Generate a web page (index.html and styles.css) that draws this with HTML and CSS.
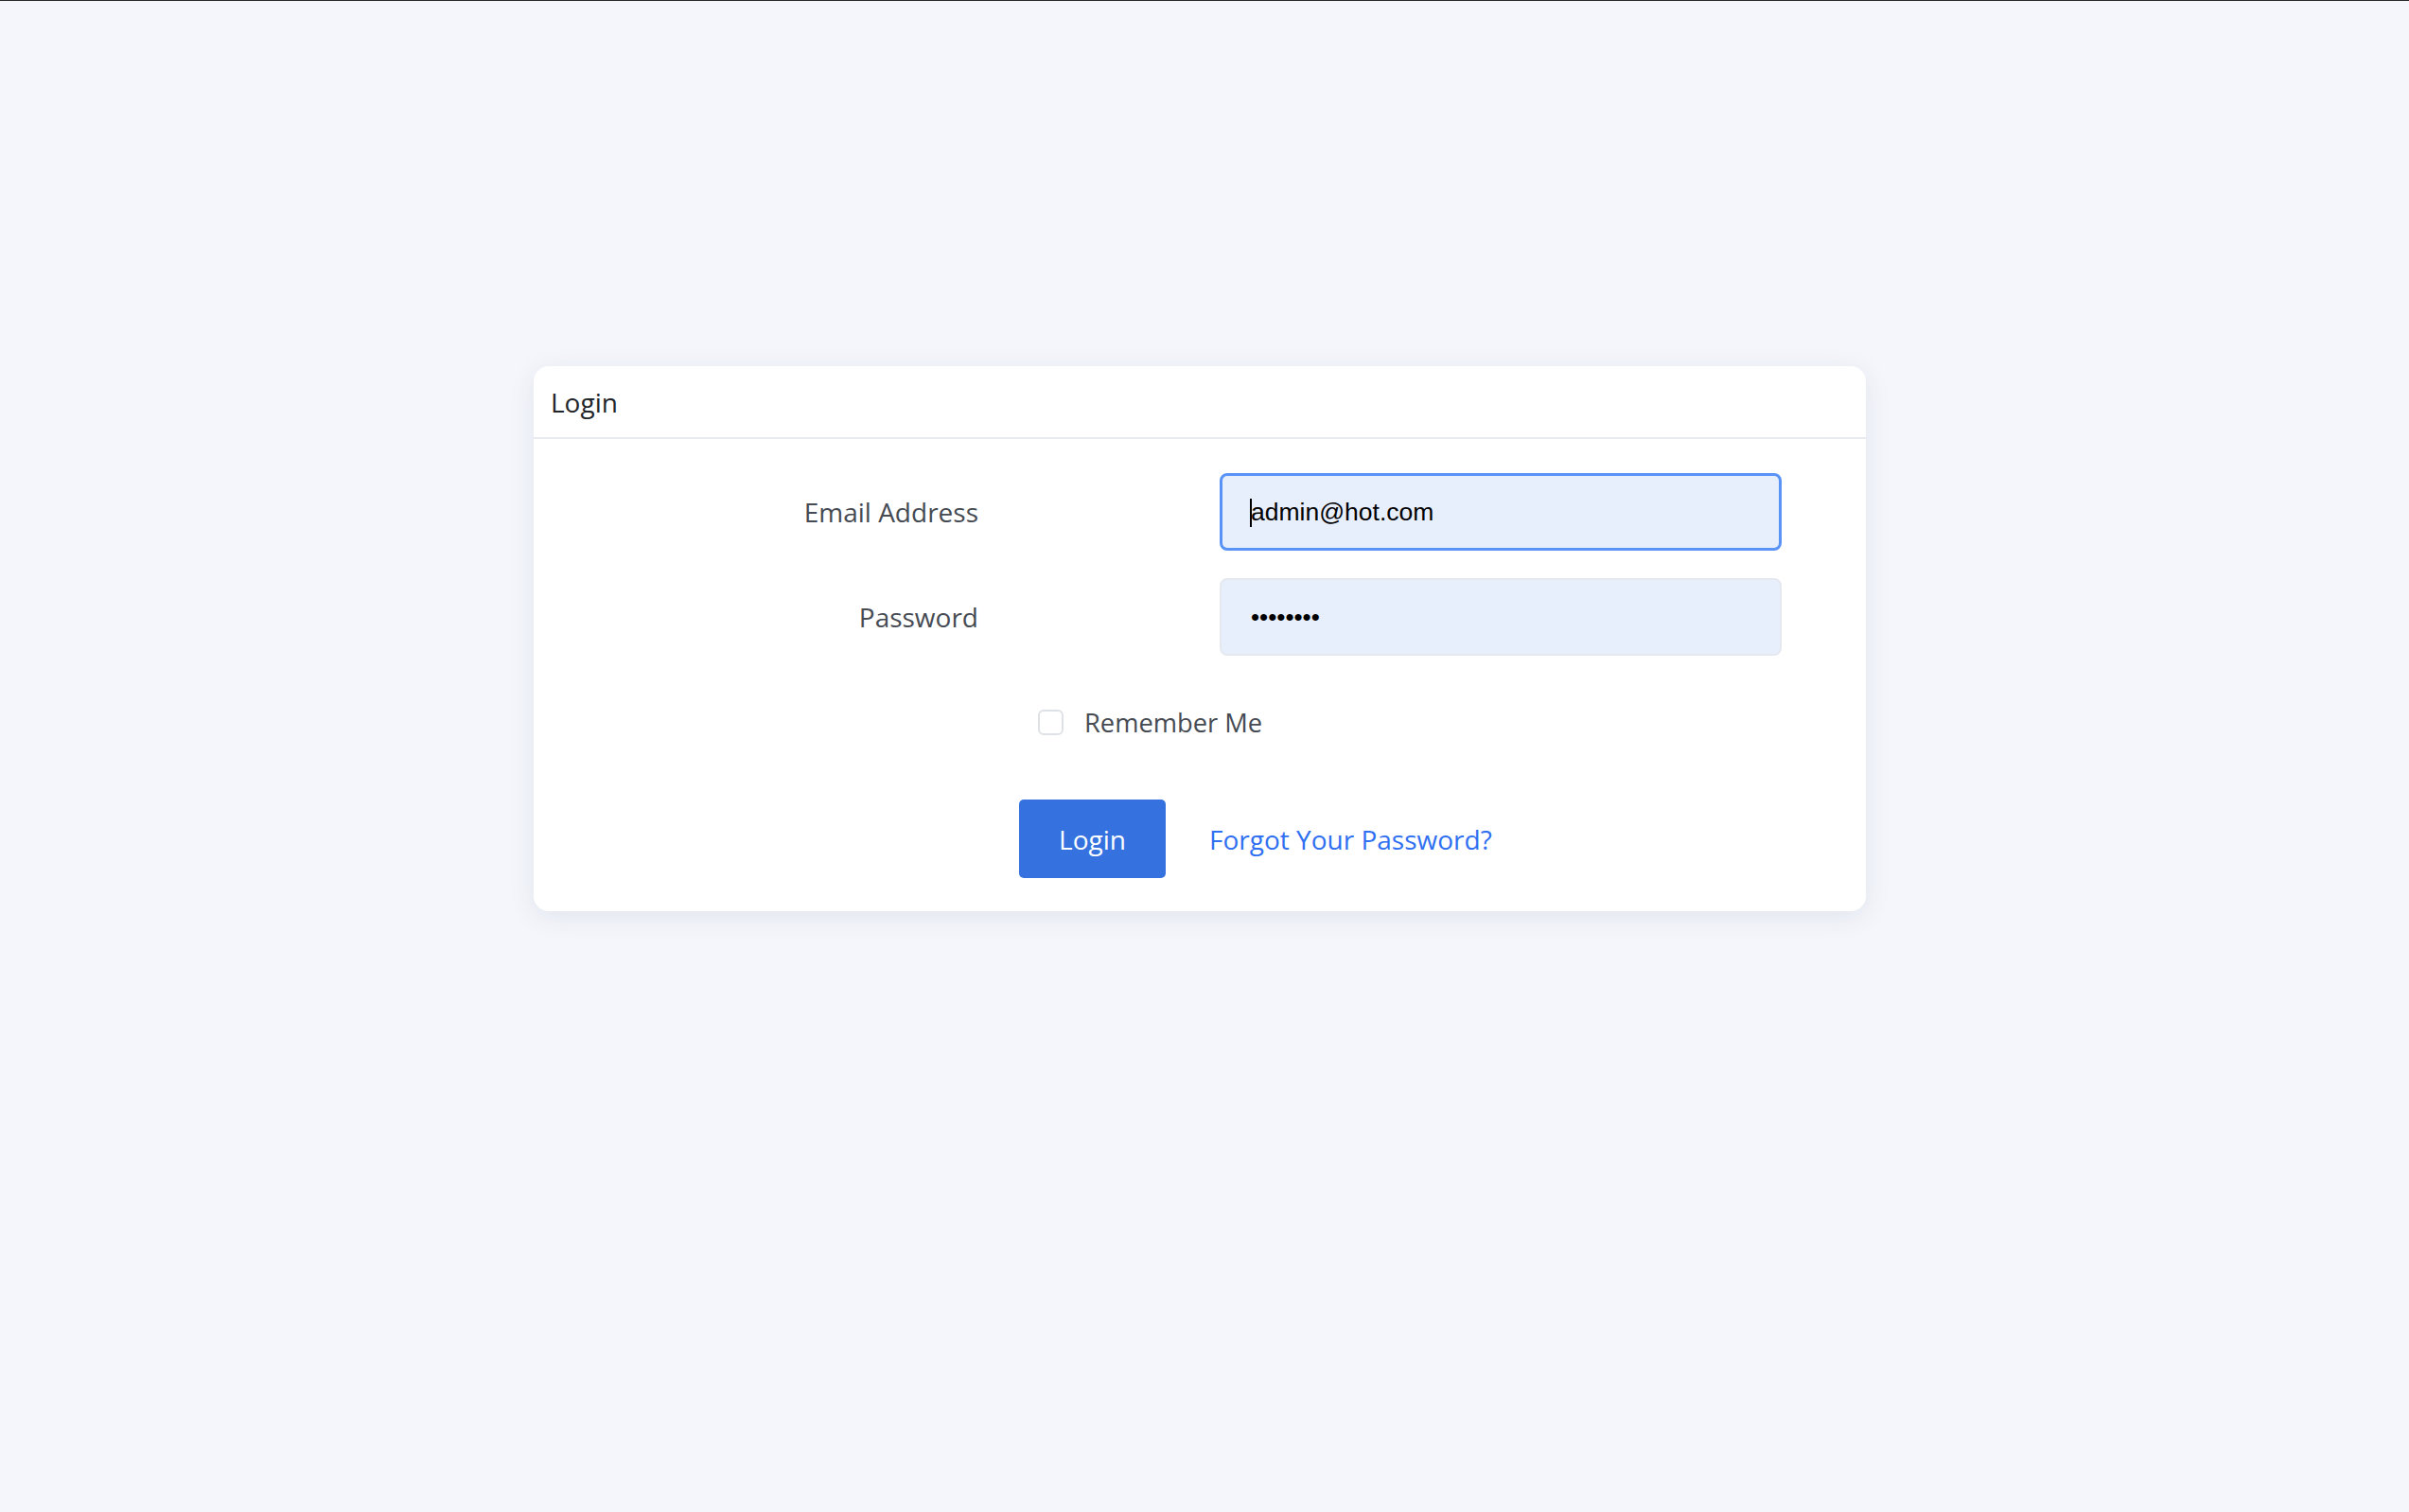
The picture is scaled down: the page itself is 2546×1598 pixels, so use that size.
FILE: index.html
```html
<!DOCTYPE html>
<html lang="en">
<head>
<meta charset="utf-8">
<title>Login</title>
<link rel="stylesheet" href="styles.css">
</head>
<body>
<div class="page">
  <div class="card">
    <div class="card-header">Login</div>
    <div class="card-body">
      <div class="form-row">
        <label class="label" for="email">Email Address</label>
        <div class="input input-focus"><span class="caret"></span><span class="value">admin@hot.com</span></div>
      </div>
      <div class="form-row">
        <label class="label" for="password">Password</label>
        <div class="input"><span class="value dots">••••••••</span></div>
      </div>
      <div class="remember-row">
        <span class="checkbox"></span>
        <span class="remember-text">Remember Me</span>
      </div>
      <div class="actions-row">
        <button class="btn">Login</button>
        <a class="link" href="#">Forgot Your Password?</a>
      </div>
    </div>
  </div>
</div>
</body>
</html>
```
FILE: styles.css
```css
* { box-sizing: border-box; }
html, body { margin: 0; padding: 0; }
body {
  background: #f4f6fb;
  border-top: 1px solid #2a2a2a;
  min-height: 1598px;
  font-family: "Open Sans", "Noto Sans", sans-serif;
}
.page {
  padding: 386px 0 0 564px;
}
.card {
  width: 1408px;
  height: 576px;
  background: #ffffff;
  border-radius: 16px;
  box-shadow: 0 6px 28px rgba(40, 50, 100, 0.09);
  display: flex;
  flex-direction: column;
}
.card-header {
  height: 77px;
  border-bottom: 2px solid #e9eaee;
  padding: 0 18px;
  display: flex;
  align-items: center;
  font-size: 28px;
  color: #212529;
}
.card-body {
  padding-top: 36px;
  display: flex;
  flex-direction: column;
}
.form-row {
  display: grid;
  grid-template-columns: 470px 594px;
  column-gap: 255px;
  align-items: center;
  margin-bottom: 29px;
}
.label {
  text-align: right;
  font-size: 28px;
  color: #464b53;
}
.input {
  height: 82px;
  border-radius: 8px;
  background: #e8effc;
  border: 2px solid #e5e8ee;
  display: flex;
  align-items: center;
  padding-left: 31px;
  position: relative;
}
.input-focus {
  border: 3px solid #5a93f6;
  padding-left: 30px;
}
.value {
  font-family: "Liberation Sans", Arial, sans-serif;
  font-size: 26.5px;
  color: #000;
}
.dots {
  font-size: 26px;
}
.caret {
  position: absolute;
  left: 29px;
  top: 24px;
  width: 2px;
  height: 30px;
  background: #000;
}
.remember-row {
  display: flex;
  align-items: center;
  padding-left: 533px;
  margin-top: 28px;
  height: 27px;
}
.checkbox {
  width: 27px;
  height: 27px;
  border: 2px solid #dee1e6;
  border-radius: 6px;
  background: #fff;
}
.remember-text {
  margin-left: 22px;
  font-size: 27.3px;
  color: #464b53;
}
.actions-row {
  display: flex;
  align-items: center;
  padding-left: 513px;
  margin-top: 68px;
}
.btn {
  width: 155px;
  height: 83px;
  border: 0;
  border-radius: 5px;
  background: #3572e0;
  color: #fff;
  font-family: "Open Sans", "Noto Sans", sans-serif;
  font-size: 28px;
  padding: 0;
}
.link {
  margin-left: 46px;
  font-size: 28px;
  color: #2f6ff1;
  text-decoration: none;
}
```
